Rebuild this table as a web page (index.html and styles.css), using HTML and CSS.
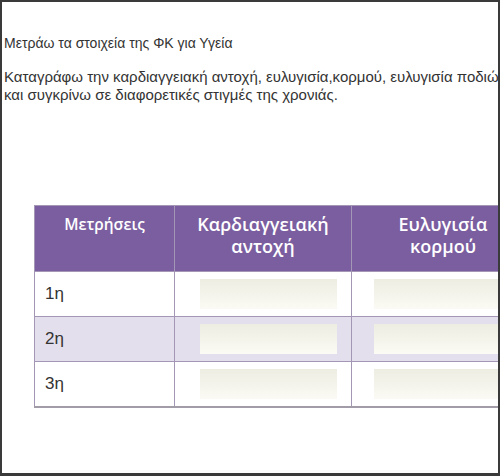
FILE: index.html
```html
<!DOCTYPE html>
<html lang="el">
<head>
<meta charset="utf-8">
<link rel="stylesheet" href="styles.css">
</head>
<body>
<div class="frame">
  <div class="content">
    <p class="title">Μετράω τα στοιχεία της ΦΚ για Υγεία</p>
    <p class="desc">Καταγράφω την καρδιαγγειακή αντοχή, ευλυγισία,κορμού, ευλυγισία ποδιών<br>και συγκρίνω σε διαφορετικές στιγμές της χρονιάς.</p>
    <table class="grid">
      <thead>
        <tr>
          <th class="c1 small">Μετρήσεις</th>
          <th class="c2">Καρδιαγγειακή<br>αντοχή</th>
          <th class="c3">Ευλυγισία<br>κορμού</th>
        </tr>
      </thead>
      <tbody>
        <tr class="r1"><td class="label">1η</td><td><div class="box"></div></td><td><div class="box wide"></div></td></tr>
        <tr class="r2 alt"><td class="label">2η</td><td><div class="box"></div></td><td><div class="box wide"></div></td></tr>
        <tr class="r3"><td class="label">3η</td><td><div class="box"></div></td><td><div class="box wide"></div></td></tr>
      </tbody>
    </table>
  </div>
</div>
</body>
</html>
```
FILE: styles.css
```css
html, body {
  margin: 0;
  padding: 0;
  background: #fff;
}
.frame {
  width: 500px;
  height: 476px;
  box-sizing: border-box;
  border: 2px solid #3a3a3a;
  border-bottom-width: 3px;
  overflow: hidden;
  background: #fff;
}
.content {
  width: 700px;
  padding-left: 2px;
  font-family: "Liberation Sans", Arial, sans-serif;
  color: #333;
}
.title {
  margin: 0;
  padding-top: 32px;
  font-size: 14px;
  line-height: 18px;
  white-space: nowrap;
}
.desc {
  margin: 16px 0 0;
  font-size: 15px;
  line-height: 18px;
  white-space: nowrap;
}
.grid {
  margin: 101px 0 0 30px;
  border-collapse: collapse;
  table-layout: fixed;
}
.grid th {
  background: #7b5e9f;
  color: #fff;
  font-family: "Open Sans", "DejaVu Sans", sans-serif;
  font-weight: 600;
  font-size: 18px;
  line-height: 22px;
  height: 66px;
  padding: 0;
  vertical-align: top;
  text-align: center;
  box-sizing: border-box;
  padding-top: 7px;
}
.grid th.small {
  font-size: 15.5px;
  padding-top: 7px;
}
.c1 { width: 140px; }
.c2 { width: 177px; }
.c3 { width: 177px; }
.grid td {
  border: 1.5px solid #a397b5;
  padding: 0;
  height: 44px;
  vertical-align: middle;
}
.grid thead th {
  border: 1.5px solid #a397b5;
  border-bottom: none;
}
.grid tr.r3 td {
  border-bottom: 2px solid #a19ca8;
}
.alt td {
  background: #e4dfec;
}
.label {
  font-size: 17px;
  padding-left: 10px !important;
  color: #333;
}
.box {
  width: 137px;
  height: 30px;
  margin-left: 25px;
  background: linear-gradient(to bottom, #eeede2, #fbfaf4);
}
.box.wide {
  margin-left: 22px;
  width: 160px;
}
```
